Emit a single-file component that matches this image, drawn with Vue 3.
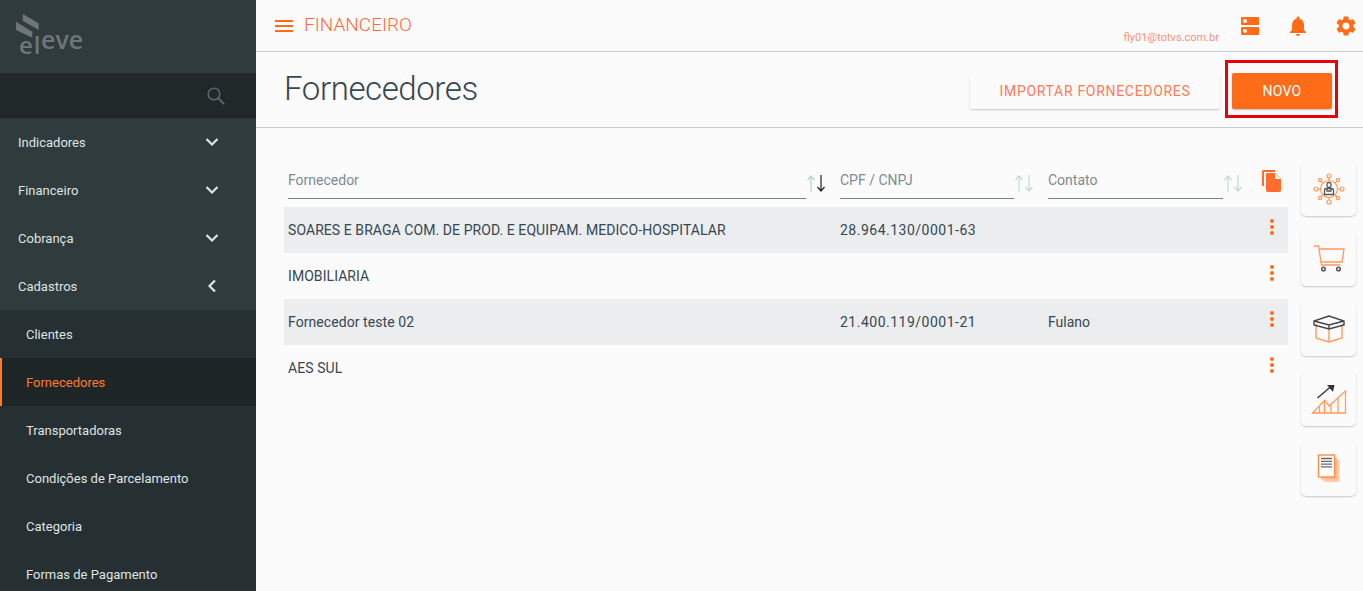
<template>
  <div class="app">
    <aside class="sidebar">
      <div class="logo">
        <svg width="70" height="48" viewBox="0 0 70 48">
          <polygon points="6.700,0 22.700,9.300 22.700,16 6.700,6.700" fill="#6d7779" />
          <polygon points="0,7.700 16.300,17.700 16.300,23.700 0,16" fill="#6d7779" />
          <text x="3" y="40" class="logo-text el">el</text>
          <text x="25" y="35" class="logo-text">eve</text>
        </svg>
      </div>
      <div class="search">
        <svg width="20" height="20" viewBox="0 0 20 20" fill="none" stroke="#56666a" stroke-width="1.6">
          <circle cx="8" cy="8" r="5.800" />
          <path d="M12.200 12.200 18 18" stroke-width="2" />
        </svg>
      </div>
      <nav>
        <div v-for="item in menu" :key="item" class="menu-row">
          <span>{{ item }}</span>
          <svg width="14" height="14" viewBox="0 0 14 14" fill="none" stroke="#dfe3e4" stroke-width="2.2">
            <path d="M1.500 4 7 9.500 12.500 4" />
          </svg>
        </div>
        <div class="menu-row">
          <span>Cadastros</span>
          <svg width="14" height="14" viewBox="0 0 14 14" fill="none" stroke="#dfe3e4" stroke-width="2.2">
            <path d="M10 1.500 4.500 7 10 12.500" />
          </svg>
        </div>
        <div
          v-for="sub in submenu"
          :key="sub"
          class="sub-row"
          :class="{ active: sub === 'Fornecedores' }"
        >
          {{ sub }}
        </div>
      </nav>
    </aside>

    <div class="page">
      <header class="topbar">
        <div class="burger"><i></i><i></i><i></i></div>
        <span class="module">FINANCEIRO</span>
        <span class="email">fly01@totvs.com.br</span>
        <svg class="top-icon" width="24" height="24" viewBox="0 0 24 24" fill="#ff6c17">
          <path d="M20 13H4c-.55 0-1 .45-1 1v6c0 .55.45 1 1 1h16c.55 0 1-.45 1-1v-6c0-.55-.45-1-1-1zM7 19c-1.100 0-2-.9-2-2s.9-2 2-2 2 .9 2 2-.9 2-2 2zM20 3H4c-.55 0-1 .45-1 1v6c0 .55.45 1 1 1h16c.55 0 1-.45 1-1V4c0-.55-.45-1-1-1zM7 9c-1.100 0-2-.9-2-2s.9-2 2-2 2 .9 2 2-.9 2-2 2z" />
        </svg>
        <svg class="top-icon" width="24" height="24" viewBox="0 0 24 24" fill="#ff6c17">
          <path d="M12 22c1.100 0 2-.9 2-2h-4c0 1.100.89 2 2 2zm6-6v-5c0-3.070-1.640-5.640-4.500-6.320V4c0-.83-.67-1.500-1.500-1.500s-1.500.67-1.500 1.500v.68C7.630 5.360 6 7.920 6 11v5l-2 2v1h16v-1l-2-2z" />
        </svg>
        <svg class="top-icon" width="24" height="24" viewBox="0 0 24 24" fill="#ff6c17">
          <path d="M19.140 12.940c.04-.3.06-.61.06-.94 0-.32-.02-.64-.07-.94l2.030-1.580c.18-.14.23-.41.12-.61l-1.920-3.320c-.12-.22-.37-.29-.59-.22l-2.390.96c-.5-.38-1.030-.7-1.620-.94l-.36-2.540c-.04-.24-.24-.41-.48-.41h-3.840c-.24 0-.43.17-.47.41l-.36 2.540c-.59.24-1.130.57-1.620.94l-2.390-.96c-.22-.08-.47 0-.59.22L2.740 8.870c-.12.21-.08.47.12.61l2.030 1.580c-.05.3-.09.63-.09.94s.02.64.07.94l-2.030 1.580c-.18.14-.23.41-.12.61l1.920 3.320c.12.22.37.29.59.22l2.390-.96c.5.38 1.030.7 1.620.94l.36 2.540c.05.24.24.41.48.41h3.840c.24 0 .44-.17.47-.41l.36-2.540c.59-.24 1.130-.56 1.620-.94l2.390.96c.22.08.47 0 .59-.22l1.920-3.320c.12-.22.07-.47-.12-.61l-2.010-1.580zM12 15.600c-1.980 0-3.600-1.620-3.600-3.600s1.620-3.600 3.600-3.600 3.600 1.620 3.600 3.600-1.620 3.600-3.600 3.600z" />
        </svg>
      </header>

      <section class="title-bar">
        <h1>Fornecedores</h1>
        <button class="btn-import">IMPORTAR FORNECEDORES</button>
        <div class="highlight">
          <button class="btn-new">NOVO</button>
        </div>
      </section>

      <div class="content">
        <div class="table">
          <div class="head">
            <div v-for="col in columns" :key="col.label" class="head-cell">
              <span class="head-label">{{ col.label }}</span>
              <svg class="sort" width="22" height="22" viewBox="0 0 22 22" fill="none" stroke-width="1.2">
                <path d="M5 20V4M1.500 8 5 4l3.500 4" :stroke="col.up" />
                <path d="M15 3v16M11.500 15l3.500 4 3.500-4" :stroke="col.down" />
              </svg>
            </div>
            <div class="head-action">
              <svg width="22" height="24" viewBox="0 0 22 24">
                <path d="M2 17V2.500C2 1.700 2.700 1 3.500 1H15v2H4v14z" fill="#ff6c2c" />
                <path d="M7 4h8l6 6v11c0 1-.8 2-2 2H8c-1 0-2-1-2-2V5c0-.6.4-1 1-1z" fill="#ff6c2c" />
                <path d="M15 4.500V10h5.500z" fill="#fff" />
              </svg>
            </div>
          </div>
          <div v-for="row in rows" :key="row.name" class="row">
            <span class="name">{{ row.name }}</span>
            <span class="doc">{{ row.doc }}</span>
            <span>{{ row.contact }}</span>
            <div class="dots"><i></i><i></i><i></i></div>
          </div>
        </div>

        <div class="rail">
          <div class="rail-card">
            <svg width="32" height="32" viewBox="0 0 32 32" fill="none" stroke="#ff9a5e" stroke-width="1.2">
              <circle cx="16" cy="16" r="8.500" />
              <circle cx="16" cy="3" r="2" />
              <circle cx="16" cy="29" r="2" />
              <circle cx="3" cy="16" r="2" />
              <circle cx="29" cy="16" r="2" />
              <circle cx="7" cy="7" r="1.700" />
              <circle cx="25" cy="7" r="1.700" />
              <circle cx="7" cy="25" r="1.700" />
              <circle cx="25" cy="25" r="1.700" />
              <path d="M16 5v2.500M16 24.500V27M5 16h2.500M24.500 16H27M8.300 8.300l1.700 1.700M23.700 8.300 22 10M8.300 23.700 10 22M23.700 23.700 22 22" />
              <rect x="14" y="9.500" width="4" height="5" rx="1.800" stroke="#555" stroke-width="1.300" />
              <path d="M11.500 21.500v-4c0-1 1-2 2-2h5c1 0 2 1 2 2v4zM14 15.500v2.500h4v-2.500" stroke="#555" stroke-width="1.300" />
            </svg>
          </div>
          <div class="rail-card">
            <svg width="32" height="30" viewBox="0 0 32 30" fill="none" stroke="#ff9a5e" stroke-width="1.3">
              <path d="M1 2h4.500l3 19h19" />
              <path d="M6 5h25l-2 13H8" />
              <circle cx="10.500" cy="25" r="1.800" stroke="#555" stroke-width="1.500" />
              <circle cx="25.500" cy="25" r="1.800" stroke="#555" stroke-width="1.500" />
            </svg>
          </div>
          <div class="rail-card">
            <svg width="32" height="30" viewBox="0 0 32 30" fill="none" stroke-width="1.4">
              <path d="M3 10v14l13 4 13-4V10M16 14v14" stroke="#ff9a5e" />
              <path d="M16 2 1 7v4l15 4 15-4V7zM1 7l15 4 15-4M16 11v4" stroke="#444" />
            </svg>
          </div>
          <div class="rail-card">
            <svg width="36" height="32" viewBox="0 0 36 32" fill="none" stroke-width="1.3">
              <path d="M1.500 30 14 17l4 6L34.500 8v22zM8.500 24v6M13.500 18v12M20 21v9M27 15v15" stroke="#ff9a5e" />
              <path d="M6.500 15 20 3.500" stroke="#333" stroke-width="1.400" />
              <path d="M16 2h7.500l-1.500 7z" fill="#333" />
            </svg>
          </div>
          <div class="rail-card">
            <svg width="26" height="30" viewBox="0 0 26 30" fill="none">
              <path d="M7.500 6h16v22h-16z" fill="#ffcba8" />
              <path d="M5 3.500h16v22H5z" fill="#ffb98a" />
              <rect x="2.500" y="1" width="16" height="22" fill="#fff" stroke="#ff8f4a" stroke-width="1.400" />
              <path d="M5 4.500h11M5 7.300h11M5 10.100h11M5 12.900h11" stroke="#666" stroke-width="1.300" />
            </svg>
          </div>
        </div>
      </div>
    </div>
  </div>
</template>

<script setup>
const menu = ['Indicadores', 'Financeiro', 'Cobrança']
const submenu = [
  'Clientes',
  'Fornecedores',
  'Transportadoras',
  'Condições de Parcelamento',
  'Categoria',
  'Formas de Pagamento',
]

const columns = [
  { label: 'Fornecedor', up: '#b6d4c4', down: '#222' },
  { label: 'CPF / CNPJ', up: '#c4dcd0', down: '#c7d6da' },
  { label: 'Contato', up: '#c7d6da', down: '#c7d6da' },
]

const rows = [
  { name: 'SOARES E BRAGA COM. DE PROD. E EQUIPAM. MEDICO-HOSPITALAR', doc: '28.964.130/0001-63', contact: '' },
  { name: 'IMOBILIARIA', doc: '', contact: '' },
  { name: 'Fornecedor teste 02', doc: '21.400.119/0001-21', contact: 'Fulano' },
  { name: 'AES SUL', doc: '', contact: '' },
]
</script>

<style>
html,
body {
  margin: 0;
  overflow: hidden;
}
</style>

<style scoped>
* {
  box-sizing: border-box;
}

.app {
  display: flex;
  height: 591px;
  overflow: hidden;
  background: #fbfbfb;
  font-family: Roboto, sans-serif;
  font-size: 14px;
  color: #37474f;
}

.sidebar {
  width: 256px;
  flex-shrink: 0;
  background: #2f3b3d;
  overflow: hidden;
  font-size: 13px;
}

.logo {
  height: 73px;
  padding: 14px 0 0 16px;
}

.logo-text {
  font-family: 'Open Sans', sans-serif;
  font-size: 25px;
  font-weight: 600;
  fill: #6d7779;
}

.logo-text.el {
  font-size: 24px;
  letter-spacing: 1px;
}

.search {
  height: 45px;
  background: #202829;
  display: flex;
  align-items: center;
  justify-content: flex-end;
  padding-right: 30px;
}

.menu-row {
  height: 48px;
  padding: 0 37px 0 18px;
  display: flex;
  align-items: center;
  justify-content: space-between;
  color: #dfe3e4;
}

.sub-row {
  height: 48px;
  padding-left: 26px;
  display: flex;
  align-items: center;
  background: #263033;
  color: #dfe3e4;
}

.sub-row.active {
  background: #1e2527;
  border-left: 2px solid #ff7a2c;
  padding-left: 24px;
  color: #ff7a2c;
}

.page {
  flex: 1;
  min-width: 0;
}

.topbar {
  height: 52px;
  border-bottom: 1px solid #ccc;
  display: flex;
  align-items: center;
  padding: 0 5px 0 19px;
}

.burger {
  width: 18px;
  margin-right: 11px;
  display: flex;
  flex-direction: column;
  gap: 3px;
}

.burger i {
  height: 2px;
  background: #ff6c17;
}

.module {
  margin-top: -2px;
  font-size: 19px;
  font-weight: 300;
  color: #ff6a3a;
}

.email {
  margin: 24px 0 0 auto;
  font-size: 11px;
  color: #f8927a;
}

.top-icon {
  margin-left: 24px;
}

.email + .top-icon {
  margin-left: 19px;
}

.title-bar {
  height: 76px;
  border-bottom: 1px solid #ccc;
  display: flex;
  align-items: center;
  padding: 0 25px 0 28px;
}

.title-bar h1 {
  margin: -3px auto 0 0;
  font-size: 33px;
  font-weight: 300;
  letter-spacing: -0.4px;
  color: #37474f;
}

.btn-import,
.btn-new {
  height: 36px;
  border: none;
  border-radius: 2px;
  font-family: inherit;
  font-size: 14px;
}

.btn-import {
  width: 250px;
  margin-top: 3px;
  background: #fbfbfb;
  color: #ff7a55;
  letter-spacing: 0.7px;
  box-shadow: 0 1px 2px rgba(0, 0, 0, 0.2);
}

.highlight {
  margin: -1px 0 0 5px;
  border: 3px solid #e8000b;
  padding: 10px 3px 6px 4px;
}

.btn-new {
  display: block;
  width: 100px;
  background: #ff6c17;
  color: #fff;
  letter-spacing: 0.3px;
  box-shadow: 0 1px 2px rgba(0, 0, 0, 0.25);
}

.content {
  display: flex;
  padding: 33px 7px 0 28px;
}

.table {
  width: 1004px;
}

.head,
.row {
  display: grid;
  grid-template-columns: 552px 208px 209px 35px;
}

.head {
  height: 45px;
  margin-bottom: 1px;
}

.head-cell {
  display: flex;
  align-items: flex-start;
  padding-left: 4px;
}

.head-label {
  flex: 1;
  height: 37px;
  margin-top: 1px;
  line-height: 36px;
  border-bottom: 1px solid #6b8a90;
  color: #7e8b90;
}

.sort {
  margin: 11px 8px 0 0;
  flex-shrink: 0;
}

.head-action {
  padding: 8px 0 0 7px;
}

.row {
  height: 46px;
  align-items: center;
}

.row:nth-child(even) {
  background: #ecedef;
}

.row > span {
  padding-left: 4px;
}

.name {
  letter-spacing: 0.07px;
}

.doc {
  letter-spacing: 0.5px;
}

.dots {
  justify-self: center;
  display: flex;
  flex-direction: column;
  gap: 2px;
  margin: -6px 0 0 3px;
}

.dots i {
  width: 4px;
  height: 4px;
  border-radius: 50%;
  background: #ff6c17;
}

.rail {
  margin: 1px 0 0 13px;
  display: flex;
  flex-direction: column;
  gap: 16px;
}

.rail-card {
  width: 55px;
  height: 54px;
  border-radius: 5px;
  background: #fbfbfb;
  box-shadow: 0 1px 2px rgba(0, 0, 0, 0.2);
  display: flex;
  align-items: center;
  justify-content: center;
}
</style>
